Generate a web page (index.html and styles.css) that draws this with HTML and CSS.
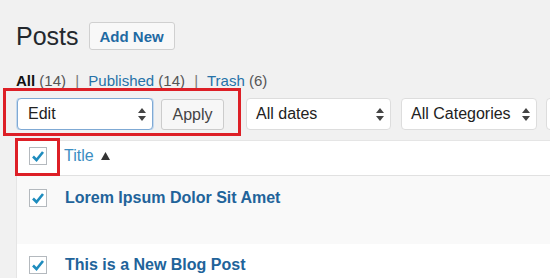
FILE: index.html
```html
<!DOCTYPE html>
<html>
<head>
<meta charset="utf-8">
<link rel="stylesheet" href="styles.css">
</head>
<body>
<div class="wrap">
  <div class="head">
    <h1 class="title">Posts</h1>
    <span class="btn add-new">Add New</span>
  </div>
  <div class="views">
    <span class="current">All</span> <span class="count">(14)</span> <span class="sep">|</span>
    <a class="link">Published</a> <span class="count">(14)</span> <span class="sep">|</span>
    <a class="link">Trash</a> <span class="count">(6)</span>
  </div>
  <div class="tablenav">
    <div class="select select-edit focus"><span>Edit</span><svg class="arr" width="8" height="13" viewBox="0 0 8 13"><path d="M4 0L8 5H0Z M4 13L0 8H8Z" fill="#444"/></svg></div>
    <span class="btn apply">Apply</span>
    <div class="select select-dates"><span>All dates</span><svg class="arr" width="8" height="13" viewBox="0 0 8 13"><path d="M4 0L8 5H0Z M4 13L0 8H8Z" fill="#444"/></svg></div>
    <div class="select select-cats"><span>All Categories</span><svg class="arr" width="8" height="13" viewBox="0 0 8 13"><path d="M4 0L8 5H0Z M4 13L0 8H8Z" fill="#444"/></svg></div>
    <div class="select select-more"></div>
  </div>
  <div class="table">
    <div class="row row-head">
      <span class="cb"><svg width="14" height="12" viewBox="0 0 14 12"><path d="M2 6.5L5.5 10L12 2" fill="none" stroke="#1e8cbe" stroke-width="2.6"/></svg></span>
      <a class="col-title">Title</a><svg class="sort" width="9" height="8" viewBox="0 0 9 8"><path d="M4.5 0L9 8H0Z" fill="#333"/></svg>
    </div>
    <div class="row row-alt">
      <span class="cb"><svg width="14" height="12" viewBox="0 0 14 12"><path d="M2 6.5L5.5 10L12 2" fill="none" stroke="#1e8cbe" stroke-width="2.6"/></svg></span>
      <a class="post-title">Lorem Ipsum Dolor Sit Amet</a>
    </div>
    <div class="row row-plain">
      <span class="cb"><svg width="14" height="12" viewBox="0 0 14 12"><path d="M2 6.5L5.5 10L12 2" fill="none" stroke="#1e8cbe" stroke-width="2.6"/></svg></span>
      <a class="post-title">This is a New Blog Post</a>
    </div>
  </div>
</div>
<div class="mark mark-bulk"></div>
<div class="mark mark-check"></div>
</body>
</html>
```
FILE: styles.css
```css
html, body {
  margin: 0;
  padding: 0;
  overflow: hidden;
  height: 100%;
}
body {
  background: #f1f1f1;
  font-family: "Liberation Sans", Arial, sans-serif;
  color: #444;
  position: relative;
}
.wrap {
  padding-left: 16px;
  height: 278px;
  overflow: hidden;
}
.head {
  display: flex;
  align-items: center;
  padding-top: 22px;
  height: 28px;
}
.title {
  margin: 0;
  font-size: 25px;
  font-weight: normal;
  color: #23282d;
  line-height: 28px;
}
.btn {
  display: inline-flex;
  align-items: center;
  box-sizing: border-box;
  border: 1px solid #cccccc;
  border-radius: 3px;
  background: #f7f7f7;
  font-size: 15px;
}
.add-new {
  margin-left: 10px;
  height: 28px;
  padding: 0 10px;
  font-weight: bold;
  color: #1f6aa3;
  background: #f8f8f8;
  border-color: #d0d0d0;
}
.views {
  margin-top: 22px;
  font-size: 15px;
  line-height: 18px;
  height: 18px;
  color: #555;
  white-space: nowrap;
}
.views .current {
  font-weight: bold;
  color: #111;
}
.views .link {
  color: #2672a8;
}
.views .sep {
  color: #777;
  margin: 0 5px;
}
.tablenav {
  display: flex;
  margin-top: 8px;
  height: 32px;
  overflow: hidden;
}
.select {
  box-sizing: border-box;
  height: 32px;
  border: 1px solid #dddddd;
  border-radius: 4px;
  background: #fff;
  display: flex;
  align-items: center;
  justify-content: space-between;
  padding: 0 6px 0 9px;
  font-size: 16px;
  color: #222;
  flex-shrink: 0;
}
.select-edit {
  width: 136px;
  margin-left: 1px;
  border-color: #7fa9d4;
  box-shadow: 0 0 0 1px #c4d9ee;
}
.select-edit span { padding-left: 1px; }
.apply {
  margin-left: 8px;
  width: 63px;
  height: 31px;
  margin-top: 1px;
  justify-content: center;
  color: #444;
  font-size: 16px;
  flex-shrink: 0;
}
.select-dates {
  margin-left: 22px;
  width: 145px;
}
.select-cats {
  margin-left: 10px;
  width: 136px;
}
.select-more {
  margin-left: 9px;
  width: 40px;
}
.table {
  margin-top: 10px;
  margin-right: -20px;
  border: 1px solid #e5e5e5;
  background: #fff;
}
.row {
  display: flex;
  align-items: flex-start;
  box-sizing: border-box;
  padding-left: 12px;
}
.row-head {
  height: 35px;
  padding-top: 6px;
  border-bottom: 1px solid #e1e1e1;
}
.row-alt {
  height: 68px;
  padding-top: 13px;
  background: #f9f9f9;
}
.row-plain {
  height: 34px;
  padding-top: 12px;
}
.cb {
  box-sizing: border-box;
  width: 18px;
  height: 18px;
  border: 1px solid #b4b9be;
  background: #fff;
  display: flex;
  align-items: center;
  justify-content: center;
  flex-shrink: 0;
}
.col-title {
  margin-left: 17px;
  font-size: 16px;
  line-height: 18px;
  color: #3b8dc2;
}
.sort {
  margin-left: 7px;
  margin-top: 5px;
}
.post-title {
  margin-left: 18px;
  font-size: 16px;
  font-weight: bold;
  line-height: 18px;
  color: #21639a;
}
.mark {
  position: absolute;
  border: 3px solid #dd1f26;
  box-sizing: border-box;
}
.mark-bulk {
  left: 3px;
  top: 88px;
  width: 238px;
  height: 48px;
}
.mark-check {
  left: 15px;
  top: 138px;
  width: 45px;
  height: 38px;
}
```
